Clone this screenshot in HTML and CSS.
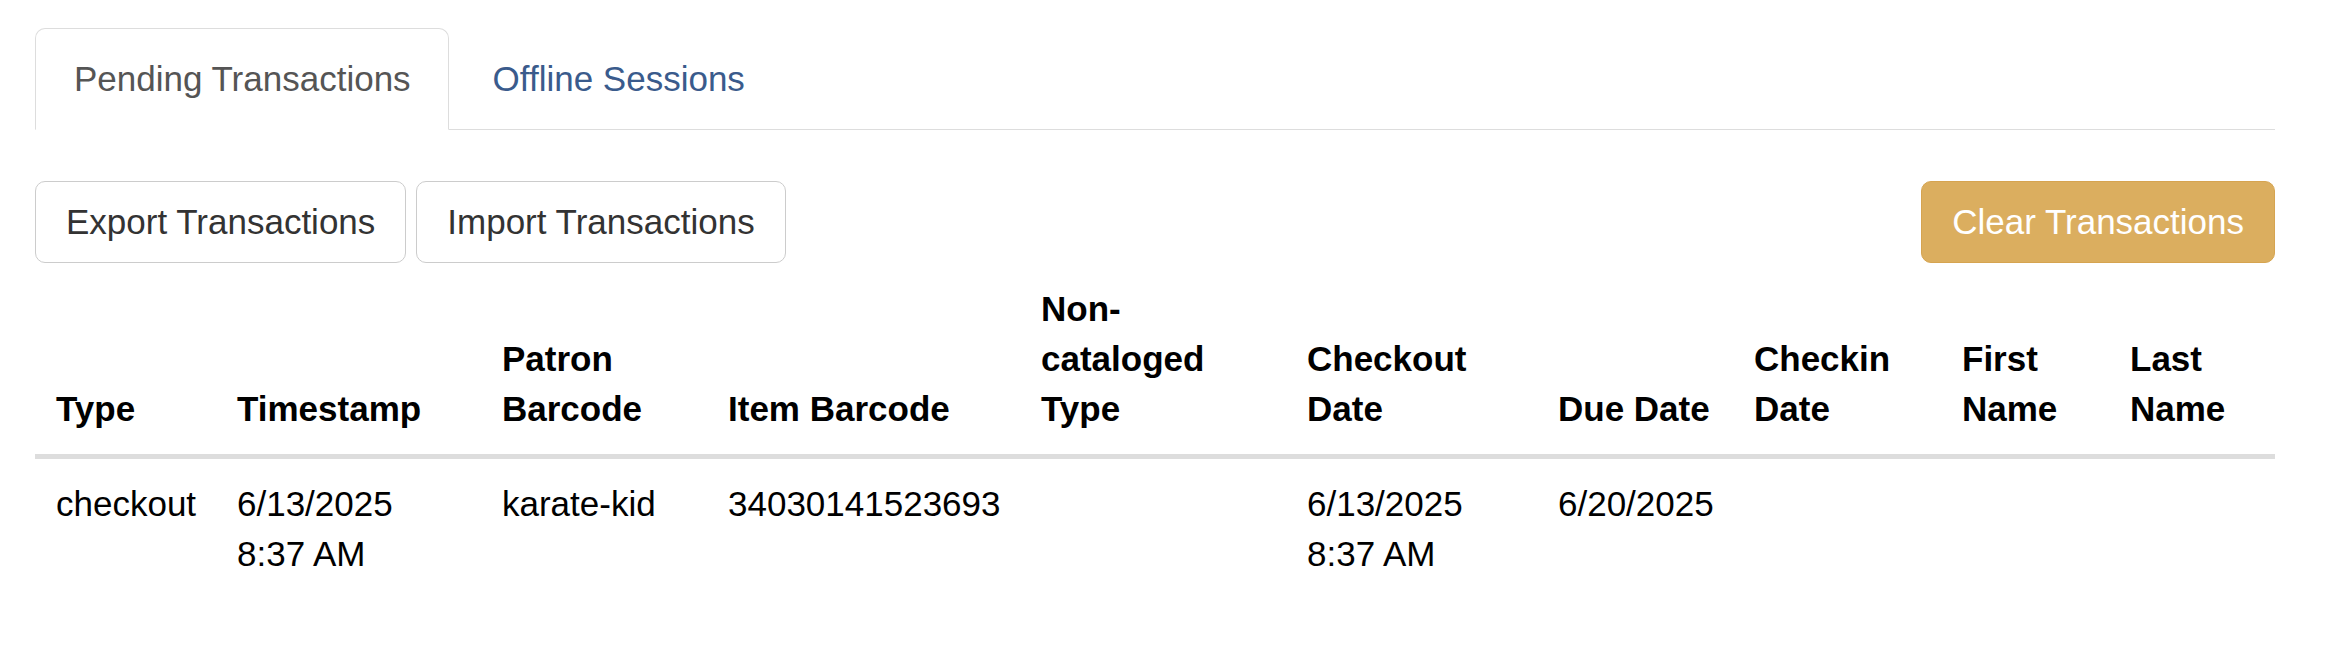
FILE: index.html
```html
<!DOCTYPE html>
<html lang="en">
<head>
<meta charset="utf-8">
<title>Offline Transactions</title>
<link rel="stylesheet" href="styles.css">
</head>
<body>
<div class="page">
  <ul class="tabs">
    <li class="tab active"><a>Pending Transactions</a></li>
    <li class="tab"><a>Offline Sessions</a></li>
  </ul>

  <div class="toolbar">
    <div class="btn-group">
      <button class="btn">Export Transactions</button>
      <button class="btn">Import Transactions</button>
    </div>
    <button class="btn btn-warning">Clear Transactions</button>
  </div>

  <table class="table">
    <colgroup>
      <col class="c-type">
      <col class="c-time">
      <col class="c-patron">
      <col class="c-item">
      <col class="c-noncat">
      <col class="c-checkout">
      <col class="c-due">
      <col class="c-checkin">
      <col class="c-first">
      <col class="c-last">
    </colgroup>
    <thead>
      <tr>
        <th>Type</th>
        <th>Timestamp</th>
        <th>Patron Barcode</th>
        <th>Item Barcode</th>
        <th>Non-cataloged Type</th>
        <th>Checkout Date</th>
        <th>Due Date</th>
        <th>Checkin Date</th>
        <th>First Name</th>
        <th>Last Name</th>
      </tr>
    </thead>
    <tbody>
      <tr>
        <td>checkout</td>
        <td>6/13/2025 8:37 AM</td>
        <td>karate-kid</td>
        <td>34030141523693</td>
        <td></td>
        <td>6/13/2025 8:37 AM</td>
        <td>6/20/2025</td>
        <td></td>
        <td></td>
        <td></td>
      </tr>
    </tbody>
  </table>
</div>
</body>
</html>
```

FILE: styles.css
```css
html, body {
  margin: 0;
  padding: 0;
  background: #fff;
}

body {
  font-family: "Liberation Sans", Arial, Helvetica, sans-serif;
  font-size: 35px;
  line-height: 50px;
  color: #000;
}

.page {
  padding: 28px 54px 0 35px;
}

/* Tabs */
.tabs {
  list-style: none;
  margin: 0;
  padding: 0;
  display: flex;
  border-bottom: 1px solid #ddd;
}

.tab {
  margin: 0 5px -1px 0;
}

.tab a {
  display: block;
  padding: 25px 37px 25px 38px;
  border: 1px solid transparent;
  border-radius: 10px 10px 0 0;
  color: #3a5b8c;
  line-height: 50px;
  cursor: pointer;
}

.tab.active a {
  color: #555;
  background: #fff;
  border-color: #ddd #ddd transparent #ddd;
}

/* Toolbar */
.toolbar {
  display: flex;
  justify-content: space-between;
  align-items: flex-start;
  margin-top: 51px;
}

.btn-group {
  display: flex;
  gap: 10px;
}

.btn {
  font-family: inherit;
  font-size: 35px;
  line-height: 50px;
  padding: 15px 30px;
  margin: 0;
  border: 1px solid #ccc;
  border-radius: 10px;
  background: #fff;
  color: #333;
  cursor: pointer;
  white-space: nowrap;
}

.btn-warning {
  background: #dbae5f;
  border-color: #d6a450;
  color: #fff;
}

/* Table */
.table {
  width: 100%;
  table-layout: fixed;
  border-collapse: collapse;
  border-spacing: 0;
  margin-top: 1px;
}

.c-type { width: 182px; }
.c-time { width: 265px; }
.c-patron { width: 226px; }
.c-item { width: 313px; }
.c-noncat { width: 266px; }
.c-checkout { width: 251px; }
.c-due { width: 196px; }
.c-checkin { width: 208px; }
.c-first { width: 168px; }
.c-last { width: 165px; }

.table th,
.table td {
  padding: 20px;
  text-align: left;
  line-height: 50px;
}

.table th:first-child,
.table td:first-child {
  padding-left: 21px;
}

.table th {
  font-weight: bold;
  vertical-align: bottom;
  border-bottom: 5px solid #dddddd;
}

.table td {
  vertical-align: top;
  font-weight: normal;
}
```
